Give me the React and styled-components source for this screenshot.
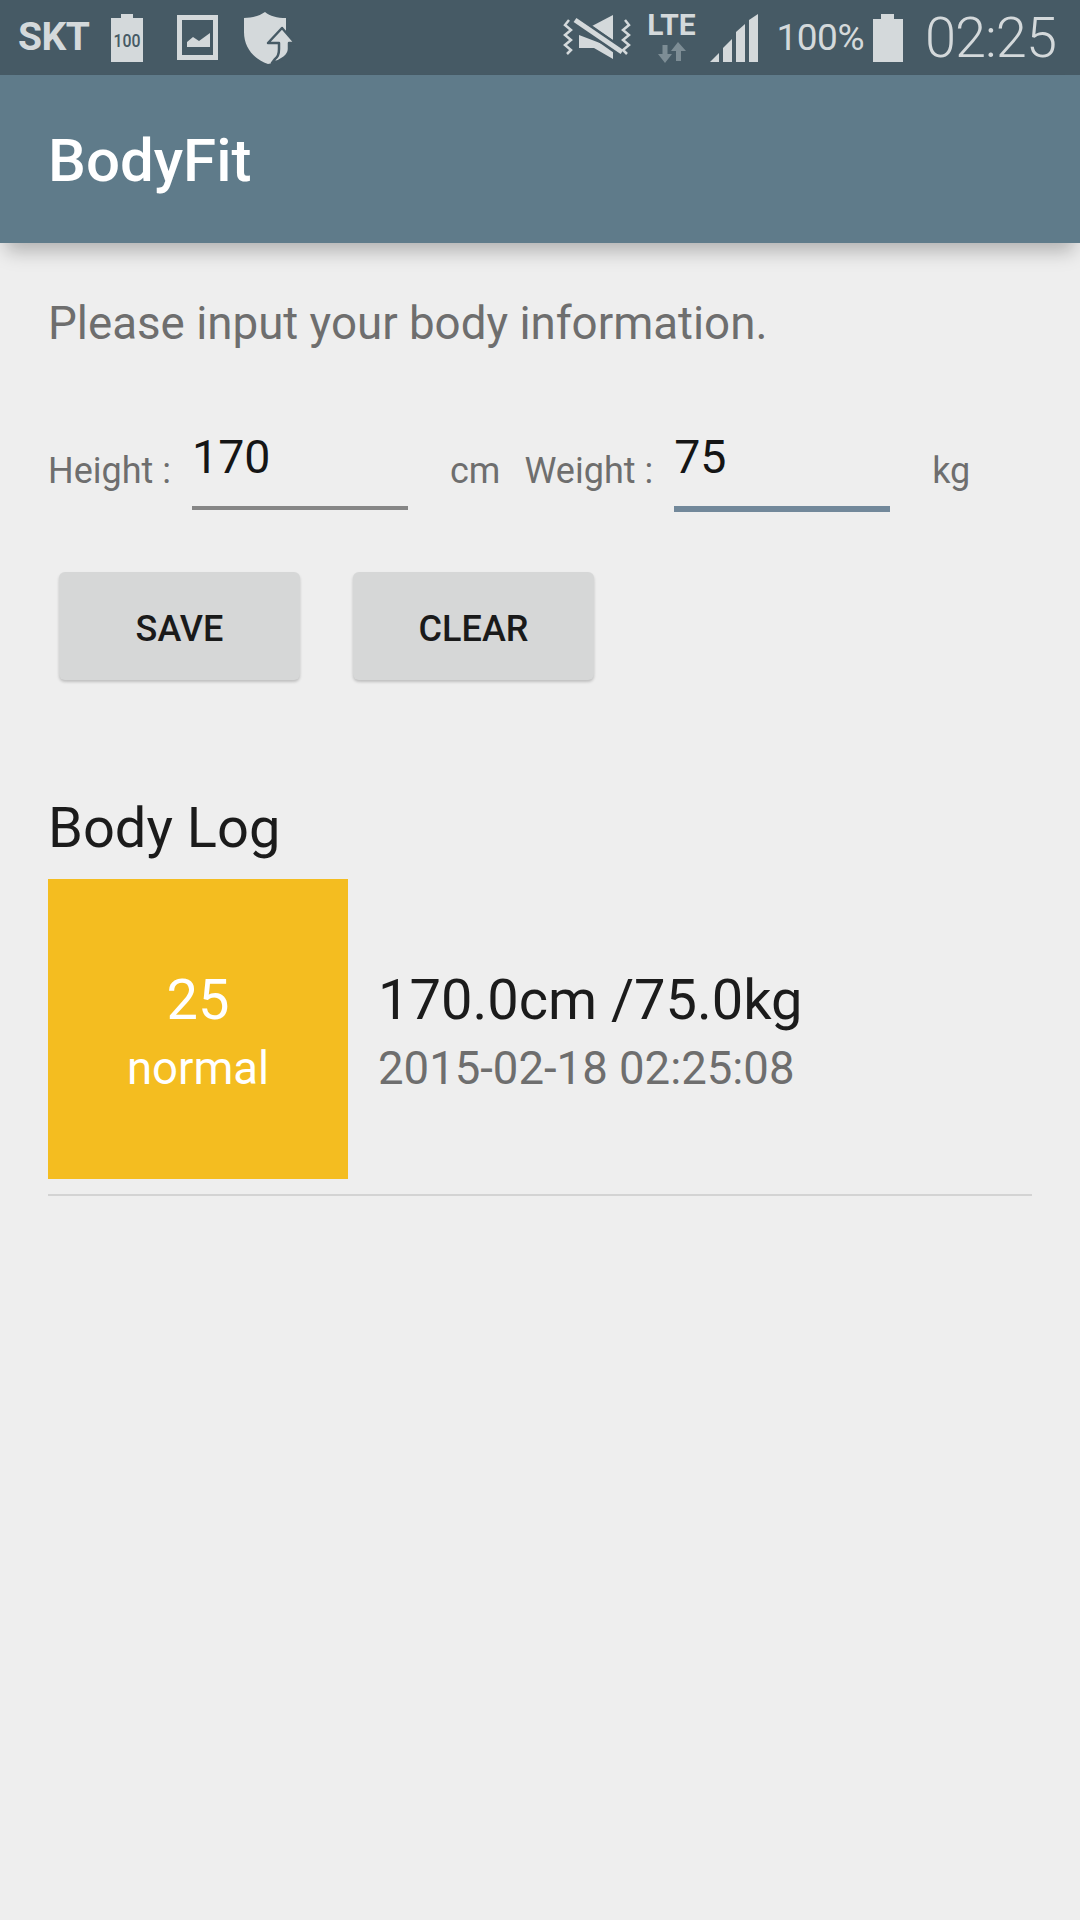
import styled, { createGlobalStyle } from "styled-components";

const GlobalStyle = createGlobalStyle`
  html, body {
    margin: 0;
    padding: 0;
    background: #eeeeee;
  }
  * {
    box-sizing: border-box;
  }
`;

const Screen = styled.div`
  width: 1080px;
  height: 1920px;
  overflow: hidden;
  background: #eeeeee;
  font-family: Roboto, "Liberation Sans", sans-serif;
`;
const StatusBar = styled.div`
  height: 75px;
  background: #465a65;
  color: #d4d9db;
  display: flex;
  align-items: center;
  justify-content: space-between;
  padding: 0 24px 0 18px;
`;
const StatusGroup = styled.div`
  display: flex;
  align-items: center;
`;
const Carrier = styled.span`
  font-size: 39px;
  font-weight: 700;
  letter-spacing: -0.5px;
  line-height: 1;
`;
const Percent = styled.span`
  font-size: 37px;
  font-weight: 400;
  letter-spacing: -0.5px;
  line-height: 1;
  margin-left: 19px;
`;
const Clock = styled.span`
  font-size: 56px;
  font-weight: 300;
  letter-spacing: -1px;
  line-height: 1;
  margin-left: 22px;
`;
const Icon = styled.svg`
  display: block;
  flex: none;
  margin-left: ${(props) => props.$left || 0}px;
`;
const Toolbar = styled.header`
  position: relative;
  height: 168px;
  background: #5f7b8a;
  box-shadow: 0 14px 18px -6px rgba(0, 0, 0, 0.26);
  display: flex;
  align-items: center;
  padding: 2px 48px 0;
`;
const Title = styled.h1`
  margin: 0;
  font-size: 60px;
  font-weight: 500;
  color: #ffffff;
`;
const Content = styled.main`
  padding: 0 48px;
`;
const Prompt = styled.p`
  margin: 0;
  padding-top: 51px;
  font-size: 45.7px;
  line-height: 60px;
  color: #6e6e6e;
`;
const FormRow = styled.div`
  display: flex;
  align-items: flex-start;
  margin-top: 76px;
  height: 84px;
`;
const Label = styled.span`
  font-size: 36px;
  line-height: 42px;
  margin-top: 20px;
  color: #6e6e6e;
  margin-left: ${(props) => props.$left || 0}px;
`;
const ValueInput = styled.input`
  width: 216px;
  height: ${(props) => (props.$focused ? 82 : 80)}px;
  margin-left: 21px;
  padding: 0 0 22px;
  border: none;
  border-bottom: ${(props) => (props.$focused ? "6px solid #72889a" : "4px solid #868686")};
  border-radius: 0;
  outline: none;
  background: transparent;
  font-family: inherit;
  font-size: 46.5px;
  line-height: 52px;
  color: #151515;
`;
const ButtonRow = styled.div`
  display: flex;
  gap: 53px;
  margin-top: 58px;
  padding-left: 11px;
`;
const FlatButton = styled.button`
  width: 241px;
  height: 108px;
  padding: 5px 0 0;
  border: none;
  border-radius: 6px;
  background: #d6d7d7;
  box-shadow: 0 2px 3px rgba(0, 0, 0, 0.2);
  font-family: inherit;
  font-size: 36px;
  font-weight: 500;
  color: #1a1a1a;
`;
const SectionTitle = styled.h2`
  margin: 117px 0 0;
  font-size: 56px;
  font-weight: 400;
  line-height: 63px;
  color: #1b1b1b;
`;
const LogItem = styled.div`
  display: flex;
  align-items: center;
  gap: 30px;
  margin-top: 19px;
  padding-bottom: 15px;
  border-bottom: 2px solid #d3d3d3;
`;
const ScoreBox = styled.div`
  width: 300px;
  height: 300px;
  padding-top: 12px;
  background: #f4bd20;
  color: #ffffff;
  display: flex;
  flex-direction: column;
  align-items: center;
  justify-content: center;
`;
const Score = styled.span`
  font-size: 56px;
  line-height: 68px;
`;
const ScoreLabel = styled.span`
  font-size: 45.5px;
  line-height: 70px;
`;
const LogText = styled.div`
  display: flex;
  flex-direction: column;
  padding-top: 12px;
`;
const LogValue = styled.span`
  font-size: 56px;
  line-height: 68px;
  color: #1b1b1b;
`;
const LogDate = styled.span`
  font-size: 45.5px;
  line-height: 70px;
  color: #6e6e6e;
`;
const NetworkLabel = styled.div`
  width: 50px;
  margin-left: 16px;
  display: flex;
  flex-direction: column;
  align-items: center;
  font-size: 30px;
  font-weight: 700;
  line-height: 24px;
  gap: 5px;
`;

const BatteryLevelIcon = () => (
  <Icon $left={22} width="32" height="48" viewBox="0 0 32 48">
    <path d="M10 0h12v4h10v44H0V4h10z" fill="#d4d9db" />
    <text x="16" y="33" textAnchor="middle" fontFamily="Roboto, sans-serif" fontSize="18" fontWeight="500" fill="#465a65" textLength="27" lengthAdjust="spacingAndGlyphs">
      100
    </text>
  </Icon>
);

const PictureIcon = () => (
  <Icon $left={34} width="41" height="45" viewBox="0 0 41 45">
    <path fillRule="evenodd" d="M0 0h41v45H0zM5 5v35h31V5z" fill="#d4d9db" />
    <path d="M10 32v-5l6-5 6 4 11-8v14z" fill="#d4d9db" />
  </Icon>
);

const ShieldIcon = () => (
  <Icon $left={26} width="52" height="52" viewBox="0 0 52 52">
    <path d="M21 0c5 4 12 6 21 6v38c-5 4-12 7-18 8C10 47 0 36 0 20V6c8 0 15-2 21-6z" fill="#d4d9db" />
    <path
      d="M38 16l13 15h-6v6c0 6-7 12-17 14l3-4c3-2 4-6 4-10v-6h-11z"
      fill="#d4d9db"
      stroke="#465a65"
      strokeWidth="2.5"
      strokeLinejoin="round"
    />
  </Icon>
);

const MuteVibrateIcon = () => (
  <Icon width="68" height="46" viewBox="0 0 68 46" fill="none">
    <path d="M16 20V33H31L50 44V33z" fill="#d4d9db" />
    <path d="M29 11L50 0V25z" fill="#d4d9db" />
    <path d="M10 3L61 39" stroke="#465a65" strokeWidth="10" />
    <path d="M12 5L59 37" stroke="#d4d9db" strokeWidth="5" />
    <path d="M6 5l-4 5 6 5-6 5 6 5-6 5 6 5-4 4" stroke="#d4d9db" strokeWidth="2.5" />
    <path d="M62 5l4 5-6 5 6 5-6 5 6 5-6 5 4 4" stroke="#d4d9db" strokeWidth="2.5" />
  </Icon>
);

const ArrowsIcon = () => (
  <Icon width="28" height="21" viewBox="0 0 28 21" fill="#7d8d95">
    <path d="M7 21L0 12h4.500V3h5v9H14z" />
    <path d="M20 0l8 9h-5v10h-5V9h-5z" />
  </Icon>
);

const SignalIcon = () => (
  <Icon $left={13} width="48" height="48" viewBox="0 0 48 48" fill="#d4d9db">
    <path d="M0 48l9-9v9z" />
    <path d="M13 34l9-9v23h-9z" />
    <path d="M26 18l9-8v38h-9z" />
    <path d="M39 6l9-6v48h-9z" />
  </Icon>
);

const BatteryIcon = () => (
  <Icon $left={9} width="30" height="48" viewBox="0 0 30 48">
    <path d="M8 0h13v5h9v43H0V5h8z" fill="#d4d9db" />
  </Icon>
);

function App() {
  return (
    <Screen>
      <GlobalStyle />
      <StatusBar>
        <StatusGroup>
          <Carrier>SKT</Carrier>
          <BatteryLevelIcon />
          <PictureIcon />
          <ShieldIcon />
        </StatusGroup>
        <StatusGroup>
          <MuteVibrateIcon />
          <NetworkLabel>
            LTE
            <ArrowsIcon />
          </NetworkLabel>
          <SignalIcon />
          <Percent>100%</Percent>
          <BatteryIcon />
          <Clock>02:25</Clock>
        </StatusGroup>
      </StatusBar>
      <Toolbar>
        <Title>BodyFit</Title>
      </Toolbar>
      <Content>
        <Prompt>Please input your body information.</Prompt>
        <FormRow>
          <Label>Height :</Label>
          <ValueInput defaultValue="170" readOnly />
          <Label $left={42}>cm</Label>
          <Label $left={24}>Weight :</Label>
          <ValueInput defaultValue="75" readOnly $focused />
          <Label $left={42}>kg</Label>
        </FormRow>
        <ButtonRow>
          <FlatButton>SAVE</FlatButton>
          <FlatButton>CLEAR</FlatButton>
        </ButtonRow>
        <SectionTitle>Body Log</SectionTitle>
        <LogItem>
          <ScoreBox>
            <Score>25</Score>
            <ScoreLabel>normal</ScoreLabel>
          </ScoreBox>
          <LogText>
            <LogValue>170.0cm /75.0kg</LogValue>
            <LogDate>2015-02-18 02:25:08</LogDate>
          </LogText>
        </LogItem>
      </Content>
    </Screen>
  );
}

export default App;
